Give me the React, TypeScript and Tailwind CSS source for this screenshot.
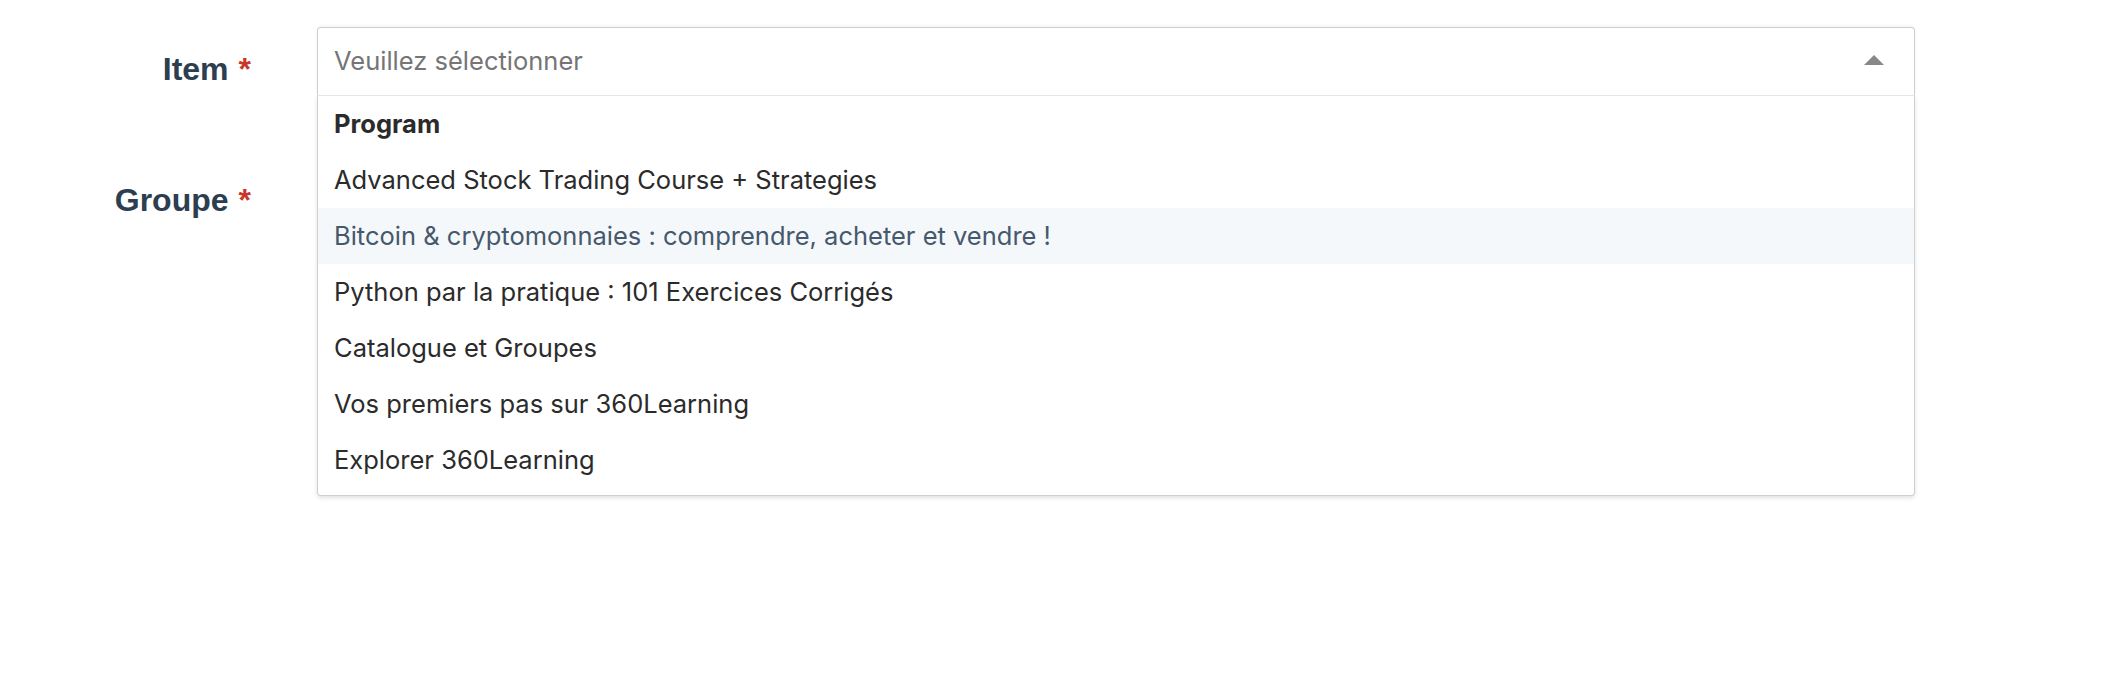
import React from "react";

// Form with an open "Item" select: groups + options in a dropdown that
// overlays the "Groupe" field below it.

const OPTIONS = [
  "Advanced Stock Trading Course + Strategies",
  "Bitcoin & cryptomonnaies : comprendre, acheter et vendre !",
  "Python par la pratique : 101 Exercices Corrigés",
  "Catalogue et Groupes",
  "Vos premiers pas sur 360Learning",
  "Explorer 360Learning",
];

const HOVERED = 1;

function FieldLabel({ text }: { text: string }) {
  return (
    <div className="w-[251px] shrink-0 text-right font-['Liberation_Sans',Arial,sans-serif] text-[32px] font-bold leading-[32px] text-[#2c3e50]">
      {text}
      <span className="ml-[10px] text-[#c9372c]">*</span>
    </div>
  );
}

function Caret() {
  return (
    <svg width="20" height="10" viewBox="0 0 20 10" className="shrink-0">
      <path d="M10 0 L20 10 L0 10 Z" fill="#888888" />
    </svg>
  );
}

export default function App() {
  return (
    <div className="min-h-[676px] w-[2118px] bg-white pt-[27px] font-['Inter','Noto_Sans',sans-serif]">
      {/* Item */}
      <div className="flex items-start">
        <div className="pt-[26px]">
          <FieldLabel text="Item" />
        </div>
        <div className="relative ml-[66px] w-[1598px]">
          <div className="flex h-[69px] items-center justify-between rounded-t-[4px] border border-[#cfcfcf] border-b-[#e8e8e8] pl-4 pr-[30px] shadow-[0_-1px_3px_rgba(0,0,0,0.06)]">
            <span className="text-[25.5px] text-[#757575]">Veuillez sélectionner</span>
            <div className="-mt-[4px]">
              <Caret />
            </div>
          </div>
          <div className="absolute left-0 right-0 top-[69px] z-10 rounded-b-[4px] border-x border-b border-[#cfcfcf] bg-white pb-[7px] shadow-[0_2px_4px_rgba(0,0,0,0.12)]">
            <div className="flex h-[56px] items-center px-4 text-[25.5px] font-bold text-[#2b2b2b]">
              Program
            </div>
            {OPTIONS.map((o, i) => (
              <div
                key={o}
                className={`flex h-[56px] items-center px-4 text-[25.5px] ${
                  i === HOVERED ? "bg-[#f5f8fb] text-[#46596c]" : "text-[#2b2b2b]"
                }`}
              >
                {o}
              </div>
            ))}
          </div>
        </div>
      </div>

      {/* Groupe (field hidden under the open menu) */}
      <div className="mt-[62px] flex items-start">
        <div className="pt-[26px]">
          <FieldLabel text="Groupe" />
        </div>
        <div className="ml-[66px] h-[69px] w-[1598px] rounded-[4px] border border-[#cfcfcf]" />
      </div>
    </div>
  );
}
